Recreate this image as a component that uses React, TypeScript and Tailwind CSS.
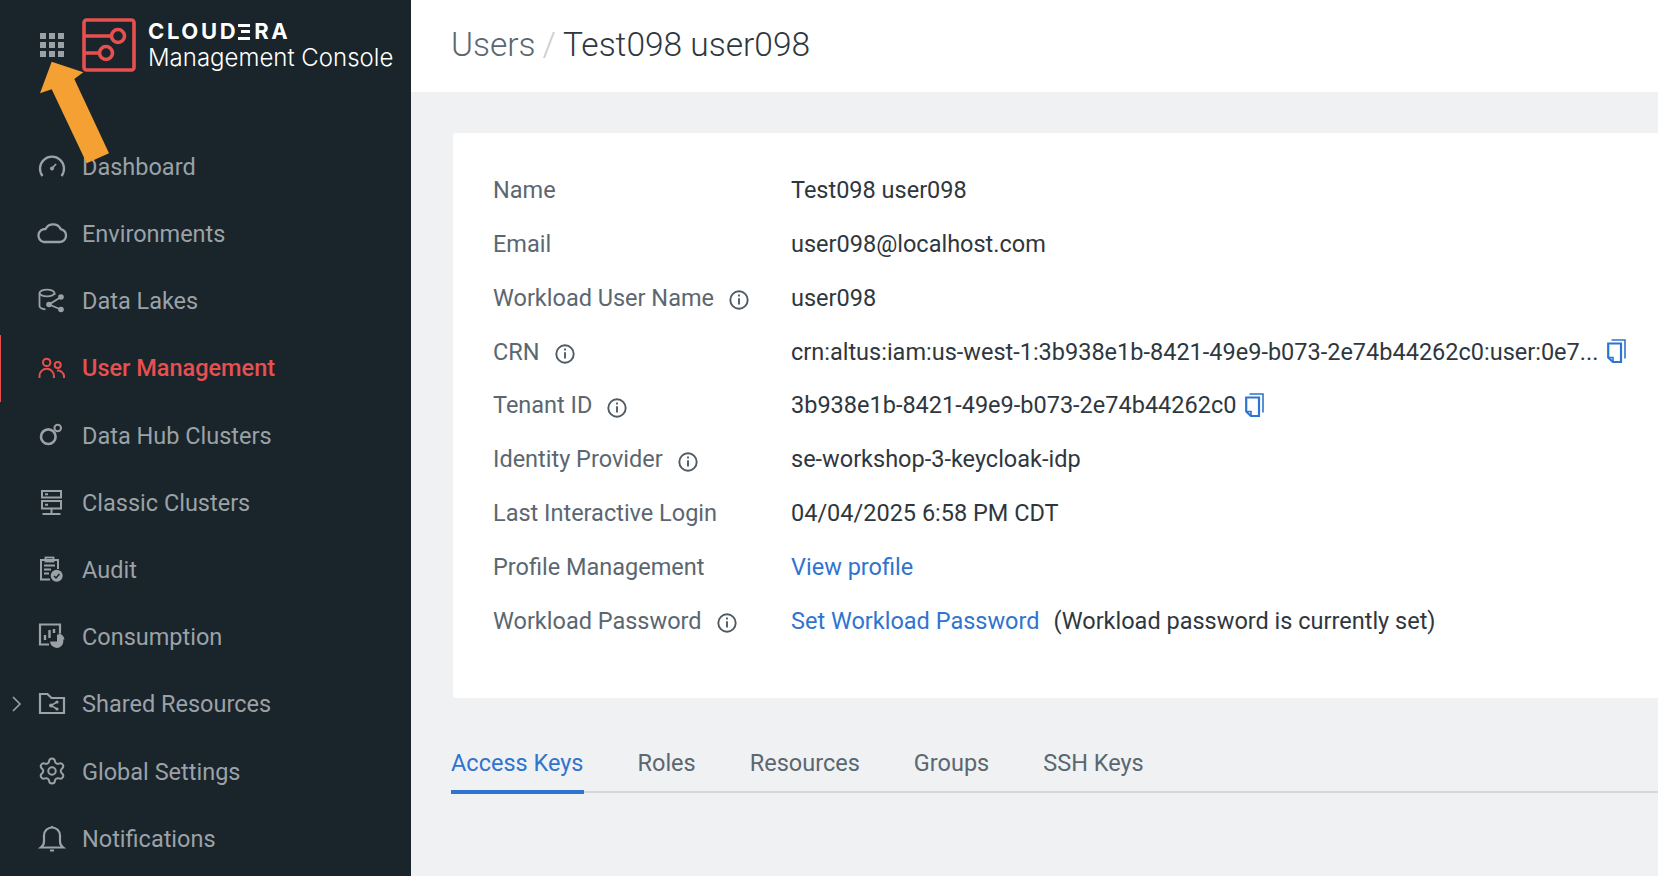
import { ReactNode } from 'react';
import { Settings } from 'lucide-react';

const Svg = ({ children }: { children: ReactNode }) => (
  <svg width="32" height="32" viewBox="0 0 32 32" fill="none" stroke="currentColor" strokeWidth="2" className="shrink-0">
    {children}
  </svg>
);

const navItems: { label: string; icon: ReactNode; active?: boolean; expandable?: boolean }[] = [
  {
    label: 'Dashboard',
    icon: (
      <Svg>
        <path d="M6.5 25A12 12 0 1 1 25.5 25" strokeWidth="2.3" />
        <circle cx="16" cy="17.5" r="2" fill="currentColor" stroke="none" />
        <path d="M16 17.5l4-4.5" strokeWidth="1.8" />
      </Svg>
    ),
  },
  {
    label: 'Environments',
    icon: (
      <Svg>
        <path d="M7.5 24H23.5A6.5 6.5 0 0 0 24.7 11.1 A8.5 8.5 0 0 0 9.5 11 A6.6 6.6 0 0 0 7.5 24Z" strokeWidth="2.3" />
      </Svg>
    ),
  },
  {
    label: 'Data Lakes',
    icon: (
      <Svg>
        <ellipse cx="11" cy="8" rx="7.5" ry="3.3" strokeWidth="1.8" />
        <path d="M3.5 8V21c0 1.8 3 3 6 3.3M18.5 8v2" strokeWidth="1.8" />
        <path d="M13 19.5L25 12M13 19.5L25 24.5" strokeWidth="1.8" />
        <circle cx="13" cy="19.5" r="2.8" fill="currentColor" stroke="none" />
        <circle cx="25" cy="12" r="2.8" fill="currentColor" stroke="none" />
        <circle cx="25" cy="24.5" r="2.8" fill="currentColor" stroke="none" />
      </Svg>
    ),
  },
  {
    label: 'User Management',
    active: true,
    icon: (
      <Svg>
        <circle cx="10.7" cy="10.4" r="3.7" />
        <path d="M3.5 26v-2a7.2 7.2 0 0 1 14.4 0v2" />
        <circle cx="21.7" cy="13" r="3" />
        <path d="M21 18.7a6 6 0 0 1 7 5.8V26" />
      </Svg>
    ),
  },
  {
    label: 'Data Hub Clusters',
    icon: (
      <Svg>
        <circle cx="12.3" cy="17.7" r="7.3" strokeWidth="2.6" />
        <circle cx="21.7" cy="9" r="3.3" />
      </Svg>
    ),
  },
  {
    label: 'Classic Clusters',
    icon: (
      <Svg>
        <rect x="6" y="4" width="19" height="6.5" />
        <rect x="6" y="14" width="19" height="7.5" />
        <path d="M9 7.2h3M9 17.7h3M15.5 21.5V27M6.5 27h18" />
      </Svg>
    ),
  },
  {
    label: 'Audit',
    icon: (
      <Svg>
        <path d="M14 25.5H5V6h17v9" />
        <rect x="9.5" y="3.5" width="8" height="4" strokeWidth="1.8" />
        <path d="M8 11.5h11M8 15.5h7M8 19.5h5" strokeWidth="1.8" />
        <circle cx="20.7" cy="21.8" r="6" fill="currentColor" stroke="none" />
        <path d="M18 22l2 2 3.5-4" stroke="#19242b" strokeWidth="1.5" />
      </Svg>
    ),
  },
  {
    label: 'Consumption',
    icon: (
      <Svg>
        <path d="M13 23.5H4V3.5h20v9" strokeWidth="2.2" />
        <path d="M9 19v-5M13.5 17V9M18 12V8" strokeWidth="2.4" />
        <path d="M21 13.5a6.7 6.7 0 1 1-7 7h7z" fill="currentColor" stroke="none" />
        <path d="M22.5 12.5a6.5 6.5 0 0 1 6 6h-6z" fill="currentColor" stroke="none" />
      </Svg>
    ),
  },
  {
    label: 'Shared Resources',
    expandable: true,
    icon: (
      <Svg>
        <path d="M4 6h7.5l4 4H28v15H4z" strokeWidth="2.2" />
        <path d="M21 14l-6 3.5 6 3.5" strokeWidth="1.5" />
        <circle cx="15" cy="17.5" r="2" fill="currentColor" stroke="none" />
        <circle cx="21" cy="14" r="1.6" fill="currentColor" stroke="none" />
        <circle cx="21" cy="21" r="1.6" fill="currentColor" stroke="none" />
      </Svg>
    ),
  },
  {
    label: 'Global Settings',
    icon: (
      <span className="flex h-8 w-8 shrink-0 items-center justify-center">
        <Settings size={30} strokeWidth={1.6} />
      </span>
    ),
  },
  {
    label: 'Notifications',
    icon: (
      <Svg>
        <path d="M5 25.5c2-1.5 3-3 3-6v-6a8 8 0 0 1 16 0v6c0 3 1 4.5 3 6z" strokeWidth="2.2" />
        <path d="M14 28.5h4M16 5V4" strokeWidth="2.2" />
      </Svg>
    ),
  },
];

const InfoIcon = () => (
  <svg width="20" height="20" viewBox="0 0 20 20" fill="none" stroke="#4f5b64" className="ml-[15px] mt-[4px] shrink-0">
    <circle cx="10" cy="10" r="8.7" strokeWidth="1.9" />
    <path d="M10 8.3v6.2" strokeWidth="1.9" />
    <path d="M10 4.6v2" strokeWidth="1.9" />
  </svg>
);

const CopyIcon = () => (
  <svg width="19" height="24" viewBox="0 0 19 24" fill="none" stroke="#2f74d0" strokeWidth="1.6" className="ml-[9px] mb-[2px] shrink-0">
    <path d="M1.2 4.5H14V23H6l-4.8-4.5z" strokeWidth="2.2" />
    <path d="M1.5 18.5H6V23" />
    <path d="M4.5 1H18V19.5" />
  </svg>
);

const linkCls = 'text-[#2f74d0]';

const rows: { label: string; info?: boolean; value: ReactNode }[] = [
  { label: 'Name', value: 'Test098 user098' },
  { label: 'Email', value: 'user098@localhost.com' },
  { label: 'Workload User Name', info: true, value: 'user098' },
  {
    label: 'CRN',
    info: true,
    value: (
      <>
        crn:altus:iam:us-west-1:3b938e1b-8421-49e9-b073-2e74b44262c0:user:0e7...
        <CopyIcon />
      </>
    ),
  },
  {
    label: 'Tenant ID',
    info: true,
    value: (
      <>
        3b938e1b-8421-49e9-b073-2e74b44262c0
        <CopyIcon />
      </>
    ),
  },
  { label: 'Identity Provider', info: true, value: 'se-workshop-3-keycloak-idp' },
  { label: 'Last Interactive Login', value: '04/04/2025 6:58 PM CDT' },
  { label: 'Profile Management', value: <span className={linkCls}>View profile</span> },
  {
    label: 'Workload Password',
    info: true,
    value: (
      <>
        <span className={linkCls}>Set Workload Password</span>
        <span className="ml-[14px]">(Workload password is currently set)</span>
      </>
    ),
  },
];

const tabs = ['Access Keys', 'Roles', 'Resources', 'Groups', 'SSH Keys'];

export default function App() {
  return (
    <div className="relative h-[878px] w-[1672px] overflow-hidden bg-white font-['Roboto',sans-serif]">
      <div className="flex h-[876px] w-[1658px]">
        {/* Sidebar */}
        <aside className="w-[411px] shrink-0 bg-[#19242b]">
          <div className="flex h-[133px] items-start pl-10 pt-[18px]">
            <div className="mt-[15px] grid grid-cols-[6px_6px_6px] gap-[3px]">
              {Array.from({ length: 9 }).map((_, i) => (
                <span key={i} className="h-[6px] w-[6px] bg-[#9ba2a7]" />
              ))}
            </div>
            <svg width="54" height="54" viewBox="0 0 54 54" fill="none" stroke="#e8504f" strokeWidth="3.6" className="ml-[18px]">
              <rect x="2" y="2" width="50" height="50" rx="2.5" />
              <path d="M2 18H29M2 35H17" />
              <circle cx="36" cy="18" r="6.5" />
              <circle cx="24" cy="35" r="6.5" />
            </svg>
            <div className="ml-[12px] text-white">
              <div className="flex h-[25px] items-center font-['Inter',sans-serif] text-[22px] font-bold leading-none tracking-[0.12em]">
                CLOUD
                <span className="relative text-transparent">
                  E
                  <span className="absolute left-0 right-[4px] top-[4px] flex h-[16px] flex-col justify-between">
                    <span className="h-[3px] bg-white" />
                    <span className="ml-[3px] h-[3px] bg-white" />
                    <span className="h-[3px] bg-white" />
                  </span>
                </span>
                RA
              </div>
              <div className="mt-[1px] font-['Inter',sans-serif] text-[24px] font-light leading-[28px] whitespace-nowrap">Management Console</div>
            </div>
          </div>
          <nav>
            {navItems.map(item => (
              <div
                key={item.label}
                className={`flex h-[67.2px] items-center border-l ${item.active ? 'border-[#e8504f] text-[#e8504f] font-medium' : 'border-transparent text-[#9ba2a7]'}`}
              >
                <span className="flex w-[35px] shrink-0 justify-start pl-[10px]">
                  {item.expandable && (
                    <svg width="12" height="16" viewBox="0 0 12 16" fill="none" stroke="currentColor" strokeWidth="1.6">
                      <path d="M2 1l7 7-7 7" />
                    </svg>
                  )}
                </span>
                {item.icon}
                <span className="ml-[14px] pt-[2px] text-[23.5px] leading-none">{item.label}</span>
              </div>
            ))}
          </nav>
        </aside>

        {/* Main */}
        <main className="flex min-w-0 flex-1 flex-col">
          <header className="flex h-[92px] shrink-0 items-center bg-white pb-[2px] pl-10 text-[33.5px] font-light">
            <span className="text-[#5b6770]">Users</span>
            <span className="mx-[7px] text-[#c9cdd1]">/</span>
            <span className="text-[#2f373e]">Test098 user098</span>
          </header>
          <div className="flex-1 bg-[#f0f1f3] pl-10 pt-[41px]">
            <section className="ml-[2px] h-[565px] rounded-l-[3px] bg-white pl-10 pt-[31px] text-[23.5px]">
              {rows.map(row => (
                <div key={row.label} className="flex h-[53.8px] items-center">
                  <div className="flex w-[298px] shrink-0 items-center text-[#5b6770]">
                    {row.label}
                    {row.info && <InfoIcon />}
                  </div>
                  <div className="flex items-center whitespace-nowrap text-[#2f373e]">{row.value}</div>
                </div>
              ))}
            </section>
            <div className="mt-[36px] flex h-[59px] gap-[54px] border-b-2 border-[#d5d8db] text-[23.5px]">
              {tabs.map((tab, i) => (
                <div
                  key={tab}
                  className={`-mb-[3px] flex items-center border-b-[4px] pt-[4px] ${i === 0 ? 'border-[#2f74d0] text-[#2f74d0]' : 'border-transparent text-[#5b6770]'}`}
                >
                  {tab}
                </div>
              ))}
            </div>
          </div>
        </main>
      </div>

      {/* Annotation arrow */}
      <svg width="120" height="170" viewBox="0 0 120 170" className="absolute left-0 top-0">
        <polygon points="51.7,61.7 83.3,72.3 74.3,79 109,153.3 86.7,163.3 51.7,89.3 40,93.3" fill="#f4a032" />
      </svg>
    </div>
  );
}
